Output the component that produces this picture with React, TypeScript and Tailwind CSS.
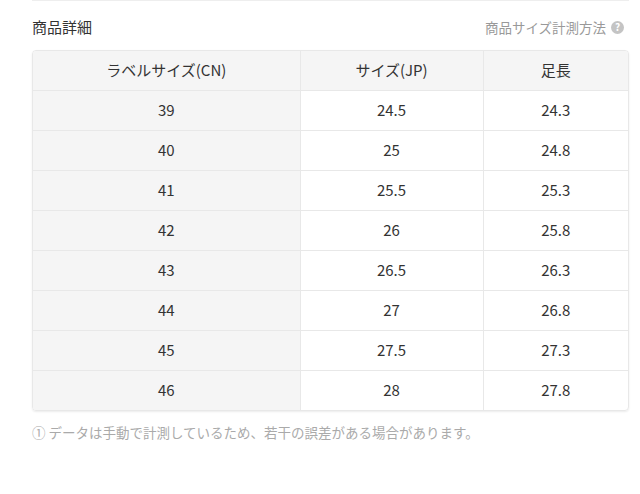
import React from 'react';

const ROWS: [string, string, string][] = [
  ['39', '24.5', '24.3'],
  ['40', '25', '24.8'],
  ['41', '25.5', '25.3'],
  ['42', '26', '25.8'],
  ['43', '26.5', '26.3'],
  ['44', '27', '26.8'],
  ['45', '27.5', '27.3'],
  ['46', '28', '27.8'],
];

function HelpIcon() {
  return (
    <span className="inline-flex h-[13px] w-[13px] shrink-0 items-center justify-center rounded-full bg-[#c4c4c4] text-[10px] leading-none font-bold text-white">
      ?
    </span>
  );
}

export default function App() {
  return (
    <div
      className="bg-white pl-8 pr-[11px] pb-12 text-[#333]"
      style={{ fontFamily: '"Noto Sans CJK JP", "Noto Sans", sans-serif' }}
    >
      <div className="h-px bg-[#eeeeee]" />

      <div className="mt-[16px] mb-[13px] flex h-5 items-center justify-between">
        <h2 className="text-[15px] leading-5 font-normal text-[#333]">商品詳細</h2>
        <div className="flex items-center gap-[5px] text-[13.5px] leading-5 text-[#999]">
          <span>商品サイズ計測方法</span>
          <HelpIcon />
          <span className="w-0" />
        </div>
      </div>

      <div className="overflow-hidden rounded-[4px] border border-[#e8e8e8] shadow-[0_1px_2px_rgba(0,0,0,0.08)]">
        <table className="w-full border-collapse text-center text-[15px] text-[#333]">
          <thead>
            <tr className="h-[39px] bg-[#f5f5f5]">
              <th className="w-[267px] border-r border-[#e8e8e8] font-normal">ラベルサイズ(CN)</th>
              <th className="w-[183px] border-r border-[#e8e8e8] font-normal">サイズ(JP)</th>
              <th className="font-normal">足長</th>
            </tr>
          </thead>
          <tbody>
            {ROWS.map(([cn, jp, foot]) => (
              <tr key={cn} className="h-10 border-t border-[#e8e8e8]">
                <td className="border-r border-[#e8e8e8] bg-[#f5f5f5]">{cn}</td>
                <td className="border-r border-[#e8e8e8]">{jp}</td>
                <td>{foot}</td>
              </tr>
            ))}
          </tbody>
        </table>
      </div>

      <p className="mt-[11px] text-[13.5px] leading-5 text-[#aaa]">
        ① データは手動で計測しているため、若干の誤差がある場合があります。
      </p>
    </div>
  );
}
